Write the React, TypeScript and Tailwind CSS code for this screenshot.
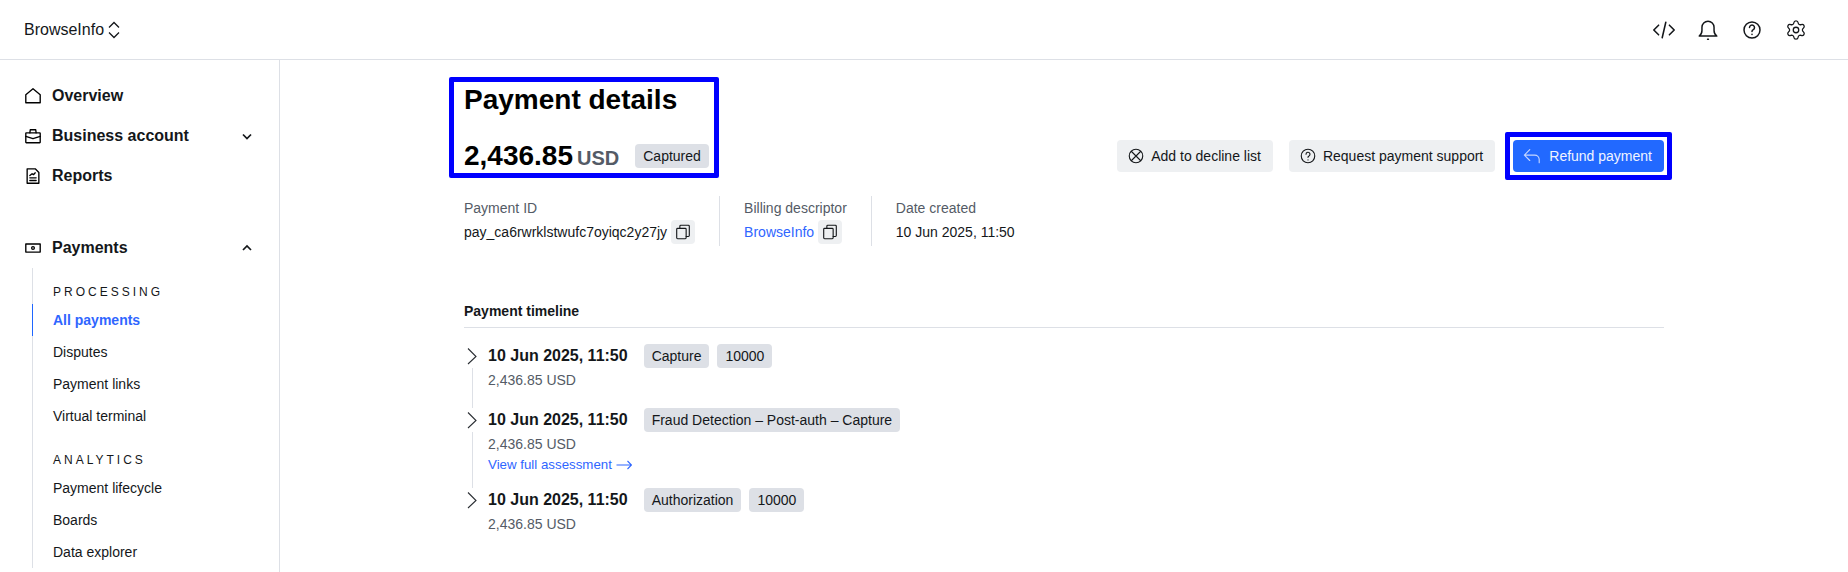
import { ReactNode } from "react";
import { Settings } from "lucide-react";

const sans = "font-['Liberation_Sans',Arial,sans-serif]";

function Icon({ size = 20, stroke = 1.25, className = "", children }: { size?: number; stroke?: number; className?: string; children: ReactNode }) {
  return (
    <svg
      width={size}
      height={size}
      viewBox="0 0 20 20"
      fill="none"
      stroke="currentColor"
      strokeWidth={stroke}
      strokeLinecap="round"
      strokeLinejoin="round"
      className={className}
    >
      {children}
    </svg>
  );
}

function CopyButton() {
  return (
    <button className="flex h-6 w-6 items-center justify-center rounded bg-[#eef0f2] text-[#14171a]">
      <Icon size={18}>
        <rect x="3" y="6" width="10.5" height="11.5" rx="1" />
        <path d="M6.5 6V3.5a1 1 0 0 1 1-1H16a1 1 0 0 1 1 1V14a1 1 0 0 1-1 1h-2.5" />
      </Icon>
    </button>
  );
}

function Chip({ children }: { children: ReactNode }) {
  return <span className="flex h-6 items-center rounded bg-[#dde0e6] px-2 text-sm text-[#14171a]">{children}</span>;
}

function ChevronRight() {
  return (
    <svg width="16" height="20" viewBox="0 0 16 20" fill="none" stroke="#2a2e33" strokeWidth={1.1}>
      <path d="M4 2.5 12 10.5 4 18" />
    </svg>
  );
}

function SideItem({ icon, label, chevron }: { icon: ReactNode; label: string; chevron?: "up" | "down" }) {
  return (
    <div className="flex h-10 items-center pl-6 pr-6">
      <span className="flex w-7 shrink-0">{icon}</span>
      <span className="flex-1 text-base font-bold text-[#14171a]">{label}</span>
      {chevron === "down" && (
        <svg width="16" height="16" viewBox="0 0 16 16" fill="none" stroke="#14171a" strokeWidth={1.75}>
          <path d="M4 6.5 8 10.5 12 6.5" />
        </svg>
      )}
      {chevron === "up" && (
        <svg width="16" height="16" viewBox="0 0 16 16" fill="none" stroke="#14171a" strokeWidth={1.75}>
          <path d="M4 10 8 6 12 10" />
        </svg>
      )}
    </div>
  );
}

function SubHeading({ children }: { children: ReactNode }) {
  return <div className="pl-5 text-xs leading-4 tracking-[0.25em] text-[#14171a]">{children}</div>;
}

function SubItem({ label, active }: { label: string; active?: boolean }) {
  return (
    <div
      className={`-ml-px flex h-8 items-center border-l pl-5 text-sm ${
        active ? "border-[#1f66ff] font-bold text-[#2f66ff]" : "border-transparent text-[#14171a]"
      }`}
    >
      {label}
    </div>
  );
}

function Sidebar() {
  return (
    <aside className="w-[280px] shrink-0 border-r border-[#dde0e6] pt-4">
      <SideItem
        label="Overview"
        icon={
          <Icon size={18} stroke={1.5}>
            <path d="M2 17.5V8.5L10 2l8 6.5v9z" />
          </Icon>
        }
      />
      <SideItem
        label="Business account"
        chevron="down"
        icon={
          <Icon size={18} stroke={1.5}>
            <rect x="2" y="6.5" width="16" height="11" rx="0.5" />
            <path d="M6.5 6.5 7 3h6l.5 3.5" />
            <path d="M2 10.5l8 2.5 8-2.5" />
          </Icon>
        }
      />
      <SideItem
        label="Reports"
        icon={
          <Icon size={18} stroke={1.5}>
            <path d="M3.5 2h9l4 4v12h-13z" />
            <path d="M6.5 9.5 9 7.5l1.5 1 2-2M6.5 12h7M6.5 15h7" />
          </Icon>
        }
      />
      <div className="mt-8">
        <SideItem
          label="Payments"
          chevron="up"
          icon={
            <Icon size={18} stroke={1.5}>
              <rect x="2" y="5.5" width="16" height="9" />
              <circle cx="10" cy="10" r="1.5" />
            </Icon>
          }
        />
      </div>
      <div className="ml-8 border-l border-[#dde0e6] pt-4">
        <SubHeading>PROCESSING</SubHeading>
        <div className="mt-1">
          <SubItem label="All payments" active />
          <SubItem label="Disputes" />
          <SubItem label="Payment links" />
          <SubItem label="Virtual terminal" />
        </div>
        <div className="mt-5">
          <SubHeading>ANALYTICS</SubHeading>
        </div>
        <div className="mt-1">
          <SubItem label="Payment lifecycle" />
          <SubItem label="Boards" />
          <SubItem label="Data explorer" />
        </div>
      </div>
    </aside>
  );
}

function TopBar() {
  return (
    <header className="flex h-[60px] shrink-0 items-center justify-between border-b border-[#dde0e6] pl-6 pr-[30px] text-[#14171a]">
      <div className="flex items-center gap-[3px] text-base">
        BrowseInfo
        <svg width="14" height="20" viewBox="0 0 14 20" fill="none" stroke="currentColor" strokeWidth={1.3}>
          <path d="M2 7.5 7 2.5 12 7.5M2 12.5 7 17.5 12 12.5" />
        </svg>
      </div>
      <div className="flex items-center">
        <span className="flex w-11 justify-center">
          <Icon size={24} stroke={1.3}>
            <path d="M5.5 6 1.5 10l4 4M14.5 6l4 4-4 4M11.5 3.5 8.5 16.5" />
          </Icon>
        </span>
        <span className="flex w-11 justify-center">
          <Icon size={22} stroke={1.35}>
            <path d="M2 15.5c1.5-1 2.5-2.5 2.5-5V7.5a5.5 5.5 0 0 1 11 0v3c0 2.5 1 4 2.5 5z" />
            <path d="M9.6 18.5h.8" />
          </Icon>
        </span>
        <span className="flex w-11 justify-center">
          <Icon size={20} stroke={1.5}>
            <circle cx="10" cy="10" r="8" />
            <path d="M7.5 7.5a2.5 2.5 0 1 1 3.8 2.2c-.9.5-1.3 1-1.3 1.9" />
            <path d="M10 14.2v.2" />
          </Icon>
        </span>
        <span className="flex w-11 justify-center">
          <Settings size={22} strokeWidth={1.4} />
        </span>
      </div>
    </header>
  );
}

function ActionButton({ icon, label }: { icon: ReactNode; label: string }) {
  return (
    <button className="flex h-8 items-center gap-1.5 rounded bg-[#eef0f2] pl-2.5 pr-3 text-sm text-[#14171a]">
      {icon}
      {label}
    </button>
  );
}

function Meta({ label, children, divider }: { label: string; children: ReactNode; divider?: boolean }) {
  return (
    <div className={`py-[2px] ${divider ? "mr-6 border-r border-[#dde0e6] pr-6" : ""}`}>
      <div className="text-sm leading-5 text-[#545b66]">{label}</div>
      <div className="mt-[2px] flex h-6 items-center gap-1 text-sm text-[#14171a]">{children}</div>
    </div>
  );
}

function TimelineRow({ chips, link, last }: { chips: string[]; link?: boolean; last?: boolean }) {
  return (
    <div className="flex">
      <div className="flex w-6 shrink-0 flex-col items-start">
        <span className="flex h-6 items-center">
          <ChevronRight />
        </span>
        {!last && <span className="ml-2 w-px flex-1 bg-[#dde0e6]" />}
      </div>
      <div className={link || last ? "" : "pb-4"}>
        <div className="flex h-6 items-center">
          <span className="mr-4 text-base font-bold text-[#14171a]">10 Jun 2025, 11:50</span>
          <span className="flex gap-2">
            {chips.map((c) => (
              <Chip key={c}>{c}</Chip>
            ))}
          </span>
        </div>
        <div className="text-sm leading-6 text-[#545b66]">2,436.85 USD</div>
        {link && (
          <div className="mt-px flex h-[31px] items-start gap-1 text-[13.3px] leading-4 text-[#2f66ff]">
            View full assessment
            <svg width="16" height="16" viewBox="0 0 16 16" fill="none" stroke="currentColor" strokeWidth={1.1}>
              <path d="M0.5 8h15M11.5 4l4 4-4 4" />
            </svg>
          </div>
        )}
      </div>
    </div>
  );
}

export default function App() {
  return (
    <div className={`flex h-screen flex-col overflow-hidden bg-white ${sans}`}>
      <TopBar />
      <div className="flex min-h-0 flex-1">
        <Sidebar />
        <main className="min-w-0 flex-1 pl-[184px] pr-[184px] pt-[22px]">
          <div className="flex items-end justify-between">
            <div className="-my-[5px] -ml-[15px] -mr-[5px] rounded-[2px] border-[5px] border-[#0000ff] pl-[10px] pr-[5px]">
              <h1 className="text-[28px] font-bold leading-9 text-black">Payment details</h1>
              <div className="mt-[21px] flex items-center">
                <span className="text-[28px] font-bold leading-[34px] text-black">2,436.85</span>
                <span className="ml-1 mt-1 text-xl font-bold text-[#545b66]">USD</span>
                <span className="ml-4 flex h-6 items-center rounded bg-[#dde0e6] px-2 text-sm text-[#14171a]">Captured</span>
              </div>
            </div>
            <div className="mb-[1px] flex items-center gap-4">
              <ActionButton
                label="Add to decline list"
                icon={
                  <Icon size={18}>
                    <circle cx="10" cy="10" r="7.5" />
                    <path d="M5 5l10 10M15 5 5 15" />
                  </Icon>
                }
              />
              <ActionButton
                label="Request payment support"
                icon={
                  <Icon size={18}>
                    <circle cx="10" cy="10" r="7.5" />
                    <path d="M7.8 8a2.2 2.2 0 1 1 3.3 1.9c-.8.4-1.1.9-1.1 1.6M10 14.2v.2" />
                  </Icon>
                }
              />
              <div className="-my-[8px] -mr-[8px] ml-[-6px] rounded-[2px] border-[5px] border-[#0000ff] p-[3px]">
                <button className="flex h-8 items-center gap-2 rounded bg-[#2269ff] pl-2.5 pr-3 text-sm text-[#f0f4ff]">
                  <Icon size={18} className="text-[#c5d6ff]">
                    <path d="M7.5 3 1.5 9l6 6M1.5 9H13a5 5 0 0 1 5 5v3.5" />
                  </Icon>
                  Refund payment
                </button>
              </div>
            </div>
          </div>

          <div className="mt-[23px] flex">
            <Meta label="Payment ID" divider>
              pay_ca6rwrklstwufc7oyiqc2y27jy
              <CopyButton />
            </Meta>
            <Meta label="Billing descriptor" divider>
              <span className="text-[#2f66ff]">BrowseInfo</span>
              <CopyButton />
            </Meta>
            <Meta label="Date created">10 Jun 2025, 11:50</Meta>
          </div>

          <div className="mt-[55px] border-b border-[#dde0e6] pb-[6px] text-sm font-bold leading-5 text-[#14171a]">
            Payment timeline
          </div>
          <div className="mt-4 flex flex-col">
            <TimelineRow chips={["Capture", "10000"]} />
            <TimelineRow chips={["Fraud Detection – Post-auth – Capture"]} link />
            <TimelineRow chips={["Authorization", "10000"]} last />
          </div>
        </main>
      </div>
    </div>
  );
}
